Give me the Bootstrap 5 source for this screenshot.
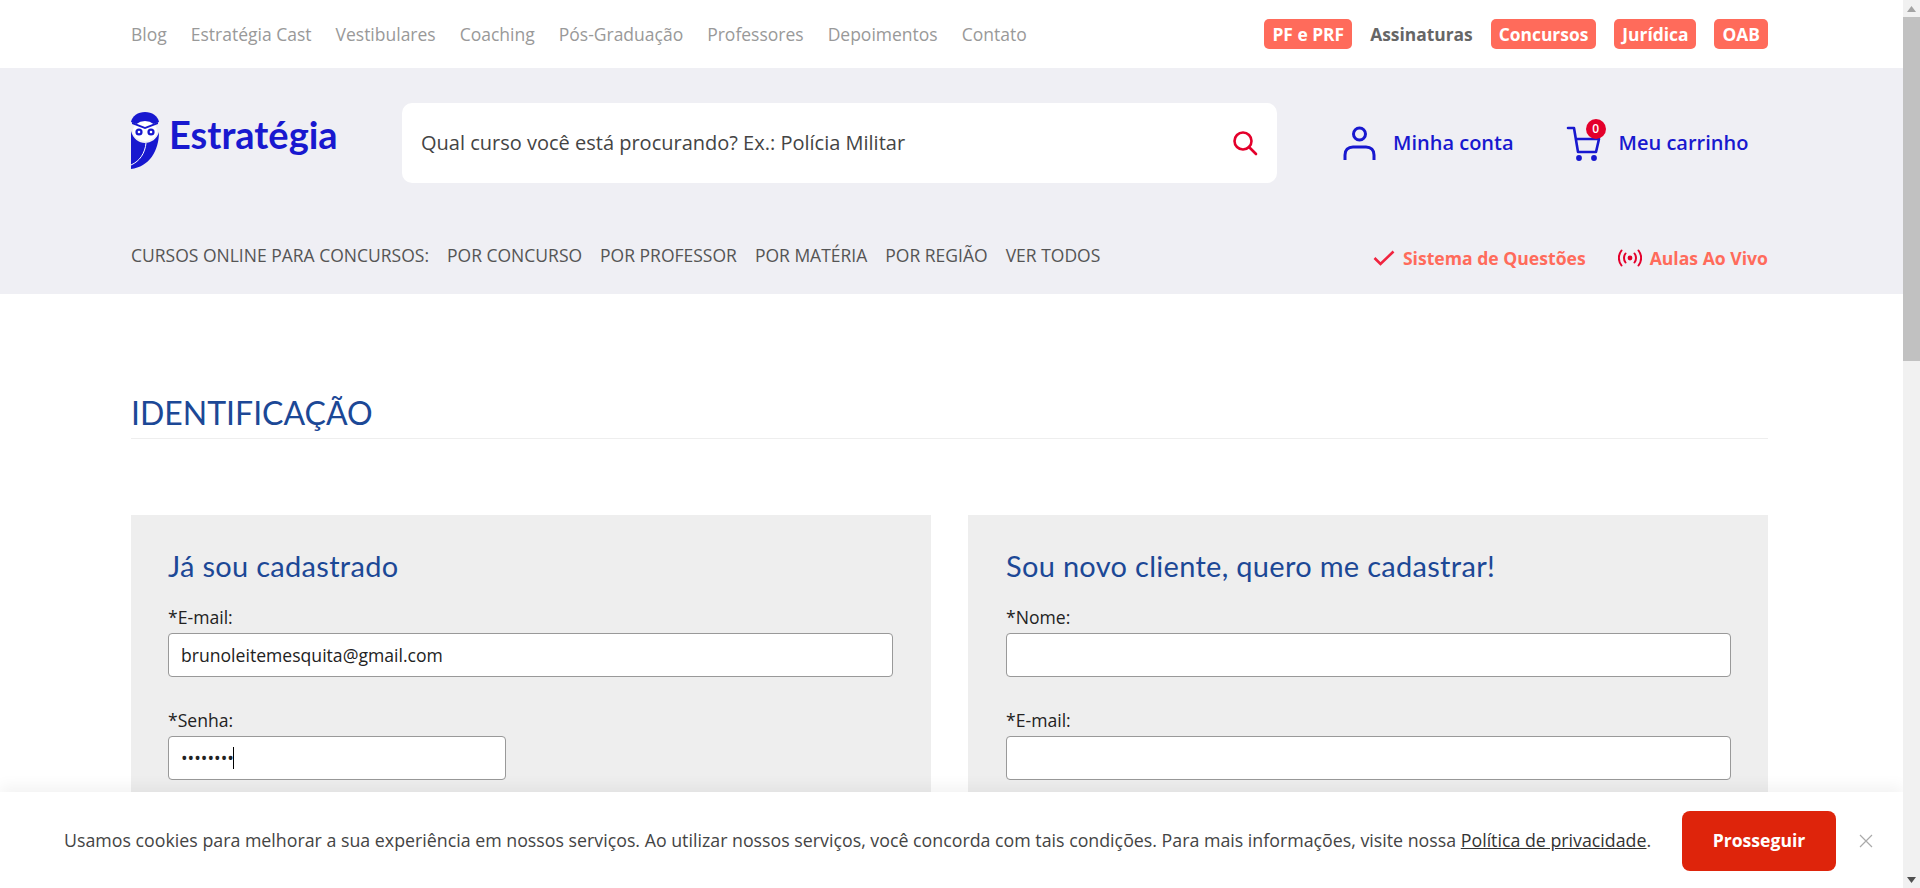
<!DOCTYPE html>
<html lang="pt-BR">
<head>
    <meta charset="UTF-8">
    <meta name="viewport" content="width=device-width, initial-scale=1.0">
    <title>Estratégia - Identificação</title>
    <link href="https://cdn.jsdelivr.net/npm/bootstrap@5.3.2/dist/css/bootstrap.min.css" rel="stylesheet">
    <style>
        html, body { height: 888px; overflow: hidden; }
        body { font-family: "Open Sans", "Liberation Sans", sans-serif; font-size: 17.5px; color: #222; background: #fff; }
        a { text-decoration: none; }
        .janela { height: 888px; }
        .pagina { width: 1903px; height: 888px; overflow: hidden; position: relative; }
        .faixa { width: 1637px; margin-left: 131px; }

        .topo { height: 68px; }
        .topo-link { color: #999; font-size: 17.5px; }
        .topo-links { gap: 24px; }
        .selos { gap: 18px; }
        .selo { background: #ff6b5b; color: #fff; font-weight: 700; font-size: 17.4px; line-height: 30px; height: 30px; padding: 0 8px; border-radius: 5px; }
        .selo-texto { color: #666; font-weight: 700; font-size: 17.4px; }

        .cabecalho { background: #efeff4; height: 226px; padding-top: 35px; }
        .linha-busca { height: 80px; }
        .logo { width: 271px; gap: 10px; color: #1818cf; }
        .logo-marca { margin-top: -5px; }
        .logo-nome { font-family: Lato, sans-serif; font-weight: 700; font-size: 38px; line-height: 1; margin-top: -18px; }
        .busca { width: 875px; height: 80px; background: #fff; border-radius: 10px; padding: 0 19px 0 19px; color: #444; font-size: 20px; }
        .acao { color: #1818cf; font-weight: 600; font-size: 20px; gap: 17px; }
        .acao-conta { margin-left: 66px; }
        .acao-carrinho { margin-left: 52px; position: relative; }
        .bolinha { position: absolute; left: 20px; top: -6px; width: 20px; height: 20px; border-radius: 50%; background: #e4002b; color: #fff; font-size: 12px; line-height: 20px; text-align: center; }

        .menu { margin-top: 55px; }
        .menu-links { gap: 18px; color: #555; font-size: 17.5px; }
        .menu-links a { color: #555; }
        .atalhos { gap: 32px; margin-top: 7px; }
        .atalho { color: #ff6b5b; font-weight: 700; font-size: 17.6px; gap: 8px; }

        .titulo-pagina { font-family: Lato, sans-serif; font-size: 32px; line-height: 40px; color: #1c4896; border-bottom: 1px solid #eee; padding-bottom: 5px; margin: 99px 0 76px; font-weight: 400; }
        .colunas { gap: 37px; }
        .painel { flex: 1 1 0; background: #eee; padding: 35px 38px 60px 37px; height: 500px; }
        .painel-novo { padding: 35px 37px 60px 38px; }
        .painel h2 { font-family: Lato, sans-serif; font-size: 29px; letter-spacing: .3px; line-height: 32px; color: #1c4896; font-weight: 400; margin: 0 0 23px; }
        .rotulo { display: block; margin: 0 0 4px; font-size: 17.6px; line-height: 24px; color: #222; }
        .campo { height: 44px; border: 1px solid #999; border-radius: 4px; padding: 0 12px; font-size: 17.6px; color: #222; margin-bottom: 31px; box-shadow: none; }
        .campo-curto { width: 338px; }
        .cursor-senha { position: absolute; left: 65px; top: 11px; width: 1px; height: 22px; background: #000; }

        .aviso { position: absolute; left: 0; right: 0; bottom: 0; height: 96px; background: #fff; box-shadow: 0 -6px 14px rgba(0, 0, 0, .05); padding: 1px 0 0 64px; }
        .aviso-texto { color: #444; font-size: 17.8px; width: 1618px; white-space: nowrap; }
        .aviso-texto a { color: #333; text-decoration: underline; }
        .btn-prosseguir { background: #de240b; color: #fff; font-weight: 700; font-size: 17.6px; width: 154px; height: 60px; border: 0; border-radius: 8px; }
        .btn-prosseguir:hover { background: #c51f08; color: #fff; }
        .fechar { margin-left: 22px; line-height: 0; }

        .rolagem { width: 17px; height: 888px; background: #f1f1f1; }
        .seta-cima { height: 17px; }
        .polegar { height: 344px; background: #c1c1c1; }
        .seta-baixo { height: 17px; margin-top: auto; }
    </style>
</head>
<body>
    <div class="janela d-flex">
        <div class="pagina">
            <div class="topo faixa d-flex align-items-center justify-content-between">
                <div class="topo-links d-flex">
                    <a class="topo-link" href="#">Blog</a>
                    <a class="topo-link" href="#">Estratégia Cast</a>
                    <a class="topo-link" href="#">Vestibulares</a>
                    <a class="topo-link" href="#">Coaching</a>
                    <a class="topo-link" href="#">Pós-Graduação</a>
                    <a class="topo-link" href="#">Professores</a>
                    <a class="topo-link" href="#">Depoimentos</a>
                    <a class="topo-link" href="#">Contato</a>
                </div>
                <div class="selos d-flex align-items-center">
                    <a class="selo" href="#">PF e PRF</a>
                    <a class="selo-texto" href="#">Assinaturas</a>
                    <a class="selo" href="#">Concursos</a>
                    <a class="selo" href="#">Jurídica</a>
                    <a class="selo" href="#">OAB</a>
                </div>
            </div>

            <div class="cabecalho">
                <div class="linha-busca faixa d-flex align-items-center">
                    <a class="logo d-flex align-items-center" href="#">
                        <svg class="logo-marca" width="28" height="57" viewBox="0 0 28 57" aria-hidden="true">
                            <path fill="#1818cf" d="M0 10C1 4 7 0 14 0S27 4 28 10L14 15 0 10Z"/>
                            <path fill="#1818cf" d="M0 19C2 27 8 31 14 31S26 27 28 20C28 39 18 55 0 57Z"/>
                            <ellipse cx="14" cy="19" rx="12" ry="10" fill="#fff"/>
                            <path fill="#1818cf" d="M1 10L14 15 27 10V12L14 17 1 12Z"/>
                            <circle cx="8" cy="20" r="3.600" fill="#1818cf"/>
                            <circle cx="20" cy="20" r="3.600" fill="#1818cf"/>
                            <circle cx="8" cy="20" r="1.300" fill="#fff"/>
                            <circle cx="20" cy="20" r="1.300" fill="#fff"/>
                            <path fill="none" stroke="#fff" stroke-width="1" d="M0 53C9 49 14 41 15 31"/>
                        </svg>
                        <span class="logo-nome">Estratégia</span>
                    </a>
                    <div class="busca d-flex align-items-center justify-content-between">
                        <span>Qual curso você está procurando? Ex.: Polícia Militar</span>
                        <svg width="26" height="26" viewBox="0 0 26 26" fill="none" stroke="#e4002b" stroke-width="2.6" stroke-linecap="round" aria-hidden="true">
                            <circle cx="11" cy="11" r="8.500"/>
                            <path d="M17 17l7 7"/>
                        </svg>
                    </div>
                    <a class="acao acao-conta d-flex align-items-center" href="#">
                        <svg width="33" height="34" viewBox="0 0 33 34" fill="none" stroke="#1818cf" stroke-width="3" aria-hidden="true">
                            <circle cx="16.5" cy="8" r="6"/>
                            <path d="M2 34v-5c0-5 3-8 8-8h13c5 0 8 3 8 8v5"/>
                        </svg>
                        <span>Minha conta</span>
                    </a>
                    <a class="acao acao-carrinho d-flex align-items-center" href="#">
                        <svg width="36" height="36" viewBox="0 0 36 36" fill="none" stroke="#1818cf" stroke-width="2.6" stroke-linecap="round" stroke-linejoin="round" aria-hidden="true">
                            <path d="M2 3h6l4 24h18l3-13H10"/>
                            <circle cx="13" cy="33" r="1.6" fill="#1818cf"/>
                            <circle cx="28" cy="33" r="1.6" fill="#1818cf"/>
                        </svg>
                        <span class="bolinha">0</span>
                        <span>Meu carrinho</span>
                    </a>
                </div>

                <div class="menu faixa d-flex align-items-center justify-content-between">
                    <div class="menu-links d-flex">
                        <span>CURSOS ONLINE PARA CONCURSOS:</span>
                        <a href="#">POR CONCURSO</a>
                        <a href="#">POR PROFESSOR</a>
                        <a href="#">POR MATÉRIA</a>
                        <a href="#">POR REGIÃO</a>
                        <a href="#">VER TODOS</a>
                    </div>
                    <div class="atalhos d-flex align-items-center">
                        <a class="atalho d-flex align-items-center" href="#">
                            <svg width="22" height="16" viewBox="0 0 22 16" fill="none" stroke="#f0243f" stroke-width="2.6" aria-hidden="true">
                                <path d="M1.5 8l6 6L20.5 1.5"/>
                            </svg>
                            <span>Sistema de Questões</span>
                        </a>
                        <a class="atalho d-flex align-items-center" href="#">
                            <svg width="24" height="18" viewBox="0 0 24 18" fill="none" stroke="#e4002b" stroke-width="2" stroke-linecap="round" aria-hidden="true">
                                <circle cx="12" cy="9" r="2.4" fill="#e4002b" stroke="none"/>
                                <path d="M7.5 4.5c-2 2.5-2 6.5 0 9M16.5 4.5c2 2.5 2 6.5 0 9M3.5 1.5c-3.5 4.500-3.500 10.500 0 15M20.500 1.500c3.500 4.500 3.500 10.500 0 15"/>
                            </svg>
                            <span>Aulas Ao Vivo</span>
                        </a>
                    </div>
                </div>
            </div>

            <div class="faixa">
                <h1 class="titulo-pagina">IDENTIFICAÇÃO</h1>
                <div class="colunas d-flex">
                    <div class="painel">
                        <h2>Já sou cadastrado</h2>
                        <label class="rotulo" for="loginEmail">*E-mail:</label>
                        <input class="form-control campo" id="loginEmail" type="text" value="brunoleitemesquita@gmail.com">
                        <label class="rotulo" for="loginSenha">*Senha:</label>
                        <div class="position-relative campo-curto">
                            <input class="form-control campo" id="loginSenha" type="password" value="12345678">
                            <span class="cursor-senha"></span>
                        </div>
                    </div>
                    <div class="painel painel-novo">
                        <h2>Sou novo cliente, quero me cadastrar!</h2>
                        <label class="rotulo" for="novoNome">*Nome:</label>
                        <input class="form-control campo" id="novoNome" type="text">
                        <label class="rotulo" for="novoEmail">*E-mail:</label>
                        <input class="form-control campo" id="novoEmail" type="text">
                    </div>
                </div>
            </div>

            <div class="aviso d-flex align-items-center">
                <div class="aviso-texto">Usamos cookies para melhorar a sua experiência em nossos serviços. Ao utilizar nossos serviços, você concorda com tais condições. Para mais informações, visite nossa <a href="#">Política de privacidade</a>.</div>
                <button class="btn btn-prosseguir" type="button">Prosseguir</button>
                <span class="fechar">
                    <svg width="16" height="16" viewBox="0 0 16 16" fill="none" stroke="#aaa" stroke-width="1.2" aria-hidden="true">
                        <path d="M2 2l12 12M14 2L2 14"/>
                    </svg>
                </span>
            </div>
        </div>

        <div class="rolagem d-flex flex-column">
            <div class="seta-cima d-flex align-items-center justify-content-center">
                <svg width="9" height="6" viewBox="0 0 9 6" aria-hidden="true"><path fill="#a3a3a3" d="M4.500 0L9 6H0Z"/></svg>
            </div>
            <div class="polegar"></div>
            <div class="seta-baixo d-flex align-items-center justify-content-center">
                <svg width="9" height="6" viewBox="0 0 9 6" aria-hidden="true"><path fill="#505050" d="M4.500 6L0 0H9Z"/></svg>
            </div>
        </div>
    </div>
    <script src="https://cdn.jsdelivr.net/npm/bootstrap@5.3.2/dist/js/bootstrap.bundle.min.js"></script>
</body>
</html>
